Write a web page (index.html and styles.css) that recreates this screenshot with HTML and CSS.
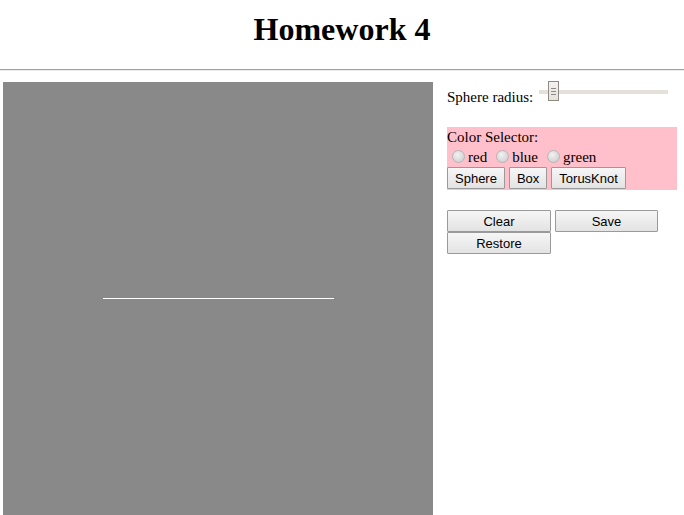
FILE: index.html
```html
<!DOCTYPE html>
<html>
<head>
<meta charset="utf-8">
<title>Homework 4</title>
<link rel="stylesheet" href="styles.css">
</head>
<body>
<h1 class="title">Homework 4</h1>
<hr class="rule">
<div class="main">
  <div class="canvas">
    <div class="line"></div>
  </div>
  <div class="panel">
    <div class="radius-row">
      <span class="label">Sphere radius:</span>
      <div class="slider"><div class="track"></div><div class="thumb"><i></i><i></i><i></i></div></div>
    </div>
    <div class="selector">
      <div class="sel-title">Color Selector:</div>
      <div class="radios">
        <label class="radio"><span class="dot"></span>red</label>
        <label class="radio"><span class="dot"></span>blue</label>
        <label class="radio"><span class="dot"></span>green</label>
      </div>
      <div class="shape-buttons">
        <button class="btn small">Sphere</button>
        <button class="btn small">Box</button>
        <button class="btn small">TorusKnot</button>
      </div>
    </div>
    <div class="actions">
      <button class="btn wide">Clear</button>
      <button class="btn wide">Save</button>
      <button class="btn wide">Restore</button>
    </div>
  </div>
</div>
</body>
</html>
```
FILE: styles.css
```css
html, body {
  margin: 0;
  padding: 0;
  background: #ffffff;
  font-family: "Liberation Serif", "Times New Roman", serif;
  overflow: hidden;
}
.title {
  margin: 0;
  padding-top: 11px;
  height: 58px;
  box-sizing: border-box;
  text-align: center;
  font-size: 32px;
  font-weight: bold;
  line-height: 36px;
  color: #000;
}
.rule {
  margin: 11px 0 0 0;
  border: 0;
  height: 2px;
  background: linear-gradient(#a0a0a0 0 1px, #ececec 1px 2px);
}
.main {
  display: flex;
  align-items: flex-start;
  margin-top: 11px;
  padding-left: 3px;
}
.canvas {
  width: 430px;
  height: 440px;
  background: #898989;
  position: relative;
  flex: none;
}
.line {
  position: absolute;
  left: 100px;
  top: 216px;
  width: 231px;
  height: 1px;
  background: #ffffff;
}
.panel {
  margin-left: 14px;
  width: 231px;
  font-size: 15px;
  color: #000;
}
.radius-row {
  display: flex;
  align-items: flex-start;
  height: 45px;
}
.label {
  margin-top: 7px;
  line-height: 17px;
}
.slider {
  position: relative;
  width: 130px;
  height: 21px;
  margin-left: 6px;
  margin-top: -1px;
}
.track {
  position: absolute;
  left: 0;
  top: 9px;
  width: 129px;
  height: 4px;
  background: #e4e0da;
}
.thumb {
  position: absolute;
  left: 9px;
  top: 0;
  width: 9px;
  height: 18px;
  border: 1px solid #8f8a84;
  background: linear-gradient(#f4f2ef, #e6e2dc);
  display: flex;
  flex-direction: column;
  align-items: center;
  justify-content: center;
  gap: 2px;
}
.thumb i {
  display: block;
  width: 5px;
  height: 1px;
  background: #8f8a84;
}
.selector {
  background: #ffc0cb;
  width: 230px;
  height: 63px;
  padding-top: 1px;
  box-sizing: border-box;
}
.sel-title {
  line-height: 18px;
}
.radios {
  display: flex;
  height: 21px;
  padding-top: 1px;
  box-sizing: border-box;
  align-items: center;
}
.radio {
  display: flex;
  align-items: center;
  margin-left: 5px;
  margin-right: 4px;
  line-height: 18px;
}
.dot {
  width: 11px;
  height: 11px;
  border-radius: 50%;
  border: 1px solid #b5b5b5;
  background: radial-gradient(circle at 40% 35%, #f2f2f2, #c8c8c8);
  margin-right: 3px;
  margin-top: -2px;
}
.shape-buttons {
  display: flex;
  gap: 4px;
}
.btn {
  font-family: "Liberation Sans", Arial, sans-serif;
  font-size: 13px;
  color: #000;
  border: 1px solid #9a9a9a;
  border-radius: 1px;
  background: linear-gradient(#f6f6f6, #e3e3e3);
  padding: 0;
  margin: 0;
  height: 22px;
  box-sizing: border-box;
}
.btn.small {
  padding: 0 7px;
  height: 22px;
}
.actions {
  display: grid;
  grid-template-columns: 104px 103px;
  column-gap: 4px;
  row-gap: 0;
  margin-top: 20px;
}
.btn.wide {
  width: 104px;
  height: 22px;
}
.btn.wide:nth-child(2) { width: 103px; }
```
